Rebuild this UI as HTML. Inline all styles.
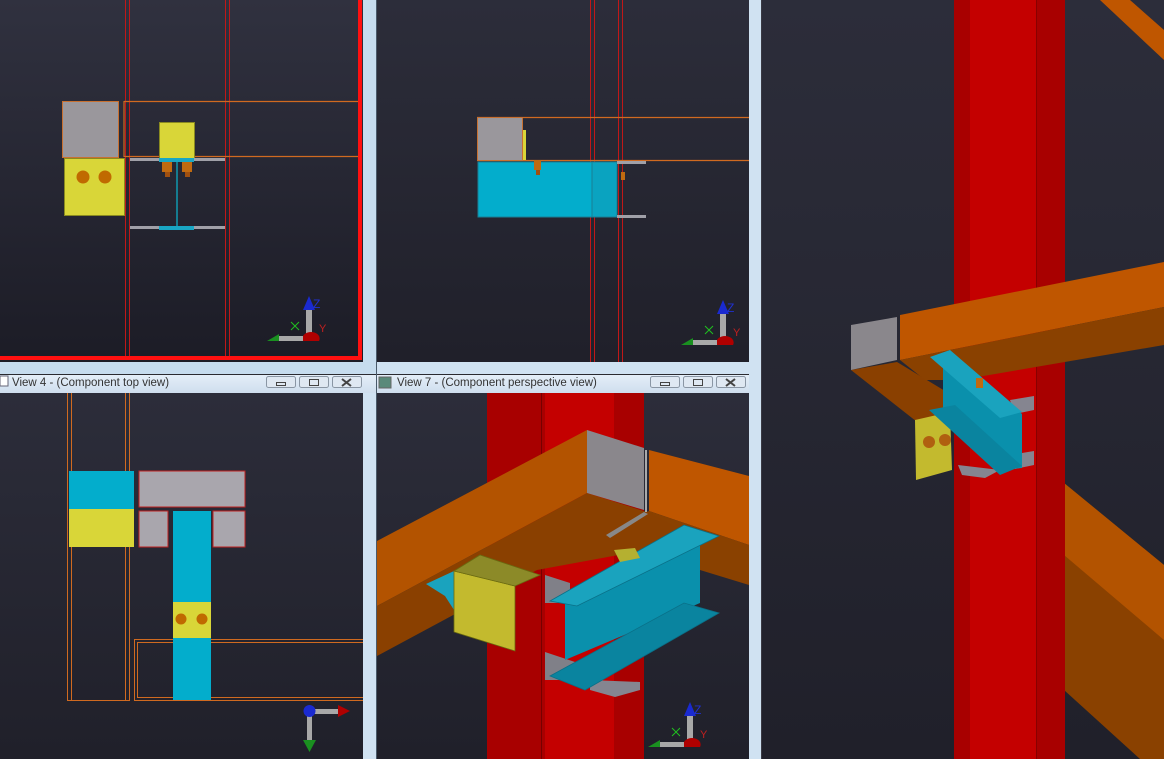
<!DOCTYPE html>
<html><head><meta charset="utf-8"><style>
html,body{margin:0;padding:0;width:1164px;height:759px;overflow:hidden;background:#d5e3f1}
svg{display:block}
text{font-family:"Liberation Sans","DejaVu Sans",sans-serif}
</style></head><body>
<svg width="1164" height="759" viewBox="0 0 1164 759" xmlns="http://www.w3.org/2000/svg">
<defs>
<linearGradient id="bg" x1="0" y1="0" x2="0" y2="1">
<stop offset="0" stop-color="#30313f"/><stop offset="1" stop-color="#1c1c26"/>
</linearGradient>
<linearGradient id="bg2" x1="0" y1="0" x2="0" y2="1">
<stop offset="0" stop-color="#2c2d3a"/><stop offset="1" stop-color="#20202a"/>
</linearGradient>
<linearGradient id="tb" x1="0" y1="0" x2="0" y2="1">
<stop offset="0" stop-color="#e4eef8"/><stop offset="1" stop-color="#cfdeee"/>
</linearGradient>
<g id="axes">
<rect x="-3" y="-28" width="6" height="30" fill="#a8a8a8"/>
<polygon points="-6,-26 0,-40 6,-26" fill="#1a2ad0"/>
<text x="4" y="-28" font-size="12" fill="#2030d0">Z</text>
<rect x="-30" y="0" width="30" height="5" fill="#a8a8a8"/>
<polygon points="-42,5 -30,-2 -30,5" fill="#1a9020"/>
<path d="M-18,-14 l8,8 M-10,-14 l-8,8" stroke="#20c020" stroke-width="1"/>
<path d="M-6,0 a8,6 0 0 1 16,5 h-16z" fill="#b00000"/>
<text x="10" y="-4" font-size="11" fill="#c02020">Y</text>
</g>
</defs>

<!-- TOP LEFT -->
<rect x="0" y="0" width="363" height="362" fill="url(#bg)"/>
<g stroke="#c01818" stroke-width="1" fill="none">
<line x1="125.5" y1="0" x2="125.5" y2="357"/><line x1="129.5" y1="0" x2="129.5" y2="357"/>
<line x1="225.5" y1="0" x2="225.5" y2="357"/><line x1="229.5" y1="0" x2="229.5" y2="357"/>
</g>
<g stroke="#d06a20" stroke-width="1.2" fill="none">
<line x1="124" y1="101.5" x2="360" y2="101.5"/><line x1="124" y1="156.5" x2="360" y2="156.5"/>
<line x1="124" y1="101" x2="124" y2="157"/>
</g>
<rect x="62.5" y="101.5" width="56" height="56" fill="#9a979c" stroke="#c87030"/>
<rect x="64.5" y="158.5" width="60" height="57" fill="#d9d638" stroke="#8a8a20"/>
<circle cx="83" cy="177" r="6.5" fill="#c06a00"/><circle cx="105" cy="177" r="6.5" fill="#c06a00"/>
<rect x="159.5" y="122.5" width="35" height="36" fill="#d9d638" stroke="#8a8a20"/>
<rect x="130" y="158" width="29" height="3" fill="#a0a0a8"/><rect x="194" y="158" width="31" height="3" fill="#a0a0a8"/>
<rect x="159" y="158" width="35" height="4" fill="#19a6c4"/>
<rect x="130" y="226" width="29" height="3" fill="#a0a0a8"/><rect x="194" y="226" width="31" height="3" fill="#a0a0a8"/>
<rect x="159" y="226" width="35" height="4" fill="#19a6c4"/>
<rect x="176" y="162" width="2" height="64" fill="#157c90"/>
<rect x="162" y="162" width="10" height="10" fill="#c06a10"/><rect x="165" y="172" width="5" height="5" fill="#a05010"/>
<rect x="182" y="162" width="10" height="10" fill="#c06a10"/><rect x="185" y="172" width="5" height="5" fill="#a05010"/>
<rect x="358" y="0" width="4" height="360" fill="#ff1010"/>
<rect x="0" y="356" width="362" height="4" fill="#ff1010"/>
<use href="#axes" x="309" y="336"/>
<rect x="363" y="0" width="13" height="374" fill="#c6dcee"/>
<rect x="0" y="362" width="363" height="12" fill="#c6dcee"/>
<line x1="0" y1="374.5" x2="1164" y2="374.5" stroke="#2a2a30"/>
<line x1="376.5" y1="0" x2="376.5" y2="759" stroke="#4a5a6a"/>

<!-- TOP MIDDLE -->
<rect x="377" y="0" width="372" height="362" fill="url(#bg2)"/>
<g stroke="#c01818" stroke-width="1">
<line x1="590.5" y1="0" x2="590.5" y2="362"/><line x1="594.5" y1="0" x2="594.5" y2="362"/>
<line x1="618.5" y1="0" x2="618.5" y2="362"/><line x1="622.5" y1="0" x2="622.5" y2="362"/>
</g>
<g stroke="#d06a20" stroke-width="1.2">
<line x1="477" y1="117.5" x2="749" y2="117.5"/><line x1="477" y1="160.5" x2="749" y2="160.5"/>
</g>
<rect x="477.5" y="117.5" width="45" height="43" fill="#9a979c" stroke="#c87030"/>
<rect x="523" y="130" width="3" height="30" fill="#d9d638"/>
<rect x="478" y="162" width="139" height="55" fill="#03adcc" stroke="#1a7f95"/>
<rect x="592" y="162" width="25" height="55" fill="#0aa3c0" stroke="#1a7f95"/>
<rect x="617" y="161" width="29" height="3" fill="#a0a0a8"/><rect x="617" y="215" width="29" height="3" fill="#a0a0a8"/>
<rect x="534" y="160" width="7" height="10" fill="#c06a10"/><rect x="536" y="170" width="4" height="5" fill="#a05010"/>
<rect x="621" y="172" width="4" height="8" fill="#c06a10"/>
<use href="#axes" x="723" y="340"/>
<rect x="377" y="362" width="372" height="12" fill="#d0e2f2"/>
<rect x="749" y="0" width="12" height="759" fill="#d0e2f2"/>
<line x1="761.5" y1="0" x2="761.5" y2="759" stroke="#3a3a44"/>

<!-- TITLE BARS -->
<rect x="0" y="375" width="376" height="18" fill="url(#tb)"/>
<rect x="377" y="375" width="372" height="18" fill="url(#tb)"/>
<rect x="0" y="376" width="8" height="10" fill="#fff" stroke="#667"/>
<text x="12" y="386" font-size="11.5" fill="#333">View 4 - (Component top view)</text>
<rect x="379" y="377" width="12" height="11" fill="#5a8a7a" stroke="#666"/>
<text x="397" y="386" font-size="11.5" fill="#333">View 7 - (Component perspective view)</text>
<g fill="#dfe8f2" stroke="#8a96a4">
<rect x="266.5" y="376.5" width="29" height="11" rx="2"/><rect x="299.5" y="376.5" width="29" height="11" rx="2"/><rect x="332.5" y="376.5" width="29" height="11" rx="2"/>
<rect x="650.5" y="376.5" width="29" height="11" rx="2"/><rect x="683.5" y="376.5" width="29" height="11" rx="2"/><rect x="716.5" y="376.5" width="29" height="11" rx="2"/>
</g>
<g stroke="#444" fill="none">
<rect x="276.5" y="382.5" width="9" height="3"/><rect x="309.5" y="379.5" width="9" height="6"/><path d="M342,379 l9,7 M351,379 l-9,7" stroke-width="2"/>
<rect x="660.5" y="382.5" width="9" height="3"/><rect x="693.5" y="379.5" width="9" height="6"/><path d="M726,379 l9,7 M735,379 l-9,7" stroke-width="2"/>
</g>

<!-- BOTTOM LEFT -->
<rect x="0" y="393" width="363" height="366" fill="url(#bg2)"/>
<g stroke="#d06a20" stroke-width="1" fill="none">
<line x1="67.5" y1="393" x2="67.5" y2="700"/><line x1="71.5" y1="393" x2="71.5" y2="700"/>
<line x1="125.5" y1="393" x2="125.5" y2="700"/><line x1="129.5" y1="393" x2="129.5" y2="700"/>
<line x1="67" y1="700.5" x2="130" y2="700.5"/>
<rect x="134.5" y="639.5" width="229" height="61"/><rect x="137.5" y="642.5" width="226" height="55"/>
</g>
<rect x="69" y="471" width="65" height="38" fill="#03adcc"/>
<rect x="69" y="509" width="65" height="38" fill="#d9d638"/>
<rect x="139" y="471" width="106" height="36" fill="#a9a6ad" stroke="#c02020"/>
<rect x="139" y="511" width="29" height="36" fill="#a9a6ad" stroke="#c02020"/>
<rect x="213" y="511" width="32" height="36" fill="#a9a6ad" stroke="#c02020"/>
<rect x="173" y="511" width="38" height="189" fill="#03adcc"/>
<rect x="173" y="602" width="38" height="36" fill="#d9d638"/>
<circle cx="181" cy="619" r="5.5" fill="#c06a00"/><circle cx="202" cy="619" r="5.5" fill="#c06a00"/>
<g>
<rect x="307" y="712" width="5" height="30" fill="#a8a8a8"/>
<polygon points="303,740 309.5,752 316,740" fill="#1a9020"/>
<rect x="312" y="709" width="28" height="5" fill="#a8a8a8"/>
<polygon points="338,705 350,711 338,717" fill="#b00000"/>
<circle cx="309.5" cy="711" r="6" fill="#1a2ad0"/>
</g>
<rect x="363" y="393" width="13" height="366" fill="#d0e2f2"/>

<!-- BOTTOM MIDDLE -->
<rect x="377" y="393" width="372" height="366" fill="url(#bg2)"/>
<rect x="487" y="393" width="157" height="366" fill="#a80000"/>
<rect x="545" y="393" width="69" height="366" fill="#c40000"/>
<line x1="541.5" y1="393" x2="541.5" y2="759" stroke="#700"/>
<!-- right beam -->
<polygon points="649,450 749,476 749,545 649,511" fill="#bf5600"/>
<polygon points="649,511 749,545 749,585 700,570 600,530" fill="#8a4100"/>
<!-- left beam -->
<polygon points="377,541 587,430 587,493 377,606" fill="#b35300"/>
<polygon points="377,606 587,493 650,513 700,540 537,570 377,656" fill="#8a4000"/>
<polygon points="587,430 644,448 644,510 587,493" fill="#8a878c"/>
<line x1="646" y1="450" x2="646" y2="512" stroke="#aaa" stroke-width="2"/>
<polygon points="606,535 644,512 648,514 610,538" fill="#888"/>
<!-- gray plates -->
<polygon points="545,575 570,583 570,603 545,603" fill="#808088"/>
<polygon points="545,652 575,662 575,680 545,680" fill="#808088"/>
<polygon points="590,680 640,682 640,690 615,697 590,690" fill="#858590"/>
<!-- cyan beam -->
<polygon points="565,603 700,533 700,603 565,660" fill="#0a90ac"/>
<polygon points="550,601 684,525 719,536 577,606" fill="#1aa3be" stroke="#0a7088" stroke-width="0.8"/>
<polygon points="550,676 684,603 719,613 585,690" fill="#0a849f" stroke="#0a7088" stroke-width="0.8"/>
<polygon points="426,584 454,571 454,610 445,596" fill="#1aa3be"/>
<!-- yellow angle -->
<polygon points="454,571 515,586 515,651 454,632" fill="#c3ba2e" stroke="#6a6a10" stroke-width="0.8"/>
<polygon points="454,571 480,555 540,575 515,586" fill="#8c8a28" stroke="#6a6a10" stroke-width="0.8"/>
<polygon points="614,550 635,548 640,558 620,562" fill="#b5b030"/>
<use href="#axes" x="690" y="742"/>

<!-- RIGHT PANEL -->
<rect x="762" y="0" width="402" height="759" fill="url(#bg2)"/>
<polygon points="1100,0 1130,0 1164,30 1164,60" fill="#bf5600"/>
<polygon points="1064,483 1164,565 1164,759 1140,759 1064,690" fill="#8a4100"/>
<polygon points="1064,483 1164,565 1164,640 1064,555" fill="#b35300"/>
<rect x="954" y="0" width="111" height="759" fill="#a80000"/>
<rect x="970" y="0" width="67" height="759" fill="#c40000"/>
<line x1="1036.5" y1="0" x2="1036.5" y2="759" stroke="#800"/>
<!-- lower-left beam -->
<polygon points="851,370 897,362 960,400 950,425 940,440" fill="#8a4000"/>
<!-- main beam -->
<polygon points="900,315 1164,262 1164,307 900,360" fill="#bf5600"/>
<polygon points="900,360 1164,307 1164,345 960,380 925,380" fill="#8a4100"/>
<polygon points="851,325 897,317 897,360 851,370" fill="#8a878c"/>
<!-- gray plates -->
<polygon points="1010,400 1034,396 1034,410 1015,414" fill="#858590"/>
<polygon points="1010,455 1034,451 1034,465 1015,469" fill="#858590"/>
<polygon points="958,465 1000,470 985,478 962,475" fill="#858590"/>
<!-- yellow -->
<polygon points="915,420 950,412 952,470 916,480" fill="#c3ba2e"/>
<circle cx="929" cy="442" r="6" fill="#b06010"/><circle cx="945" cy="440" r="6" fill="#b06010"/>
<!-- cyan -->
<polygon points="943,355 952,352 1022,414 1022,468 998,470 943,412" fill="#0a90ac"/>
<polygon points="930,357 950,350 1022,412 1000,418" fill="#1aa3be"/>
<polygon points="929,410 955,405 1022,466 1000,475" fill="#0a849f"/>
<rect x="976" y="378" width="7" height="10" fill="#c06a10"/>
</svg>
</body></html>
